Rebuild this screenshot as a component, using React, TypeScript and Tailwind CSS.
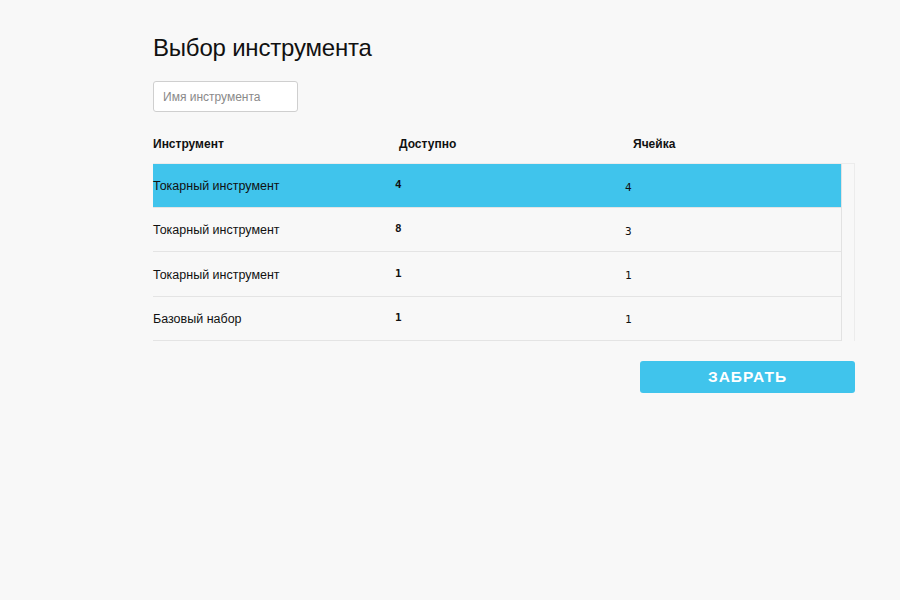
const rows = [
  { name: 'Токарный инструмент', qty: '4', cell: '4' },
  { name: 'Токарный инструмент', qty: '8', cell: '3' },
  { name: 'Токарный инструмент', qty: '1', cell: '1' },
  { name: 'Базовый набор', qty: '1', cell: '1' },
]

export default function App() {
  const selected = 0

  return (
    <div className="min-h-[600px] w-full bg-[#f8f8f8] font-['Liberation_Sans',Arial,sans-serif] text-[#111]">
      <div className="pl-[153px] pt-[33px]">
        <h1 className="text-[24px] leading-[30px] tracking-[-0.2px]">Выбор инструмента</h1>

        <input
          className="mt-[18px] block h-[31px] w-[145px] rounded-[3px] border border-[#cfcfcf] bg-white px-[9px] text-[12px] text-[#333] outline-none placeholder:text-[#8a8a8a]"
          placeholder="Имя инструмента"
        />

        {/* Column headers */}
        <div className="mt-[24px] flex h-[16px] items-center text-[12px] font-bold">
          <span className="w-[246px]">Инструмент</span>
          <span className="w-[234px]">Доступно</span>
          <span>Ячейка</span>
        </div>

        {/* Table body with scroll track */}
        <div className="mt-[11px] flex w-[702px] border-t border-r border-[#ececec]">
          <div className="w-[689px] border-r border-[#e2e2e2]">
            {rows.map((row, i) => (
              <div
                key={i}
                className={
                  i === selected
                    ? 'flex h-[44px] items-center border-b border-[#e4e4e4] bg-[#40c4ec] pt-[2px]'
                    : 'flex h-[44.3px] items-center border-b border-[#e4e4e4] pt-[2px]'
                }
              >
                <span className="w-[242px] text-[12.5px]">{row.name}</span>
                <span className="mb-[2px] w-[230px] font-['DejaVu_Sans_Mono',monospace] text-[11px] font-bold">
                  {row.qty}
                </span>
                <span className="mt-[3px] font-['DejaVu_Sans_Mono',monospace] text-[11px]">{row.cell}</span>
              </div>
            ))}
          </div>
          <div className="flex-1" />
        </div>

        <div className="mt-[20px] flex w-[702px] justify-end">
          <button className="h-[32px] w-[215px] rounded-[3px] bg-[#40c4ec] text-[15.5px] font-bold tracking-[1px] text-white">
            ЗАБРАТЬ
          </button>
        </div>
      </div>
    </div>
  )
}
